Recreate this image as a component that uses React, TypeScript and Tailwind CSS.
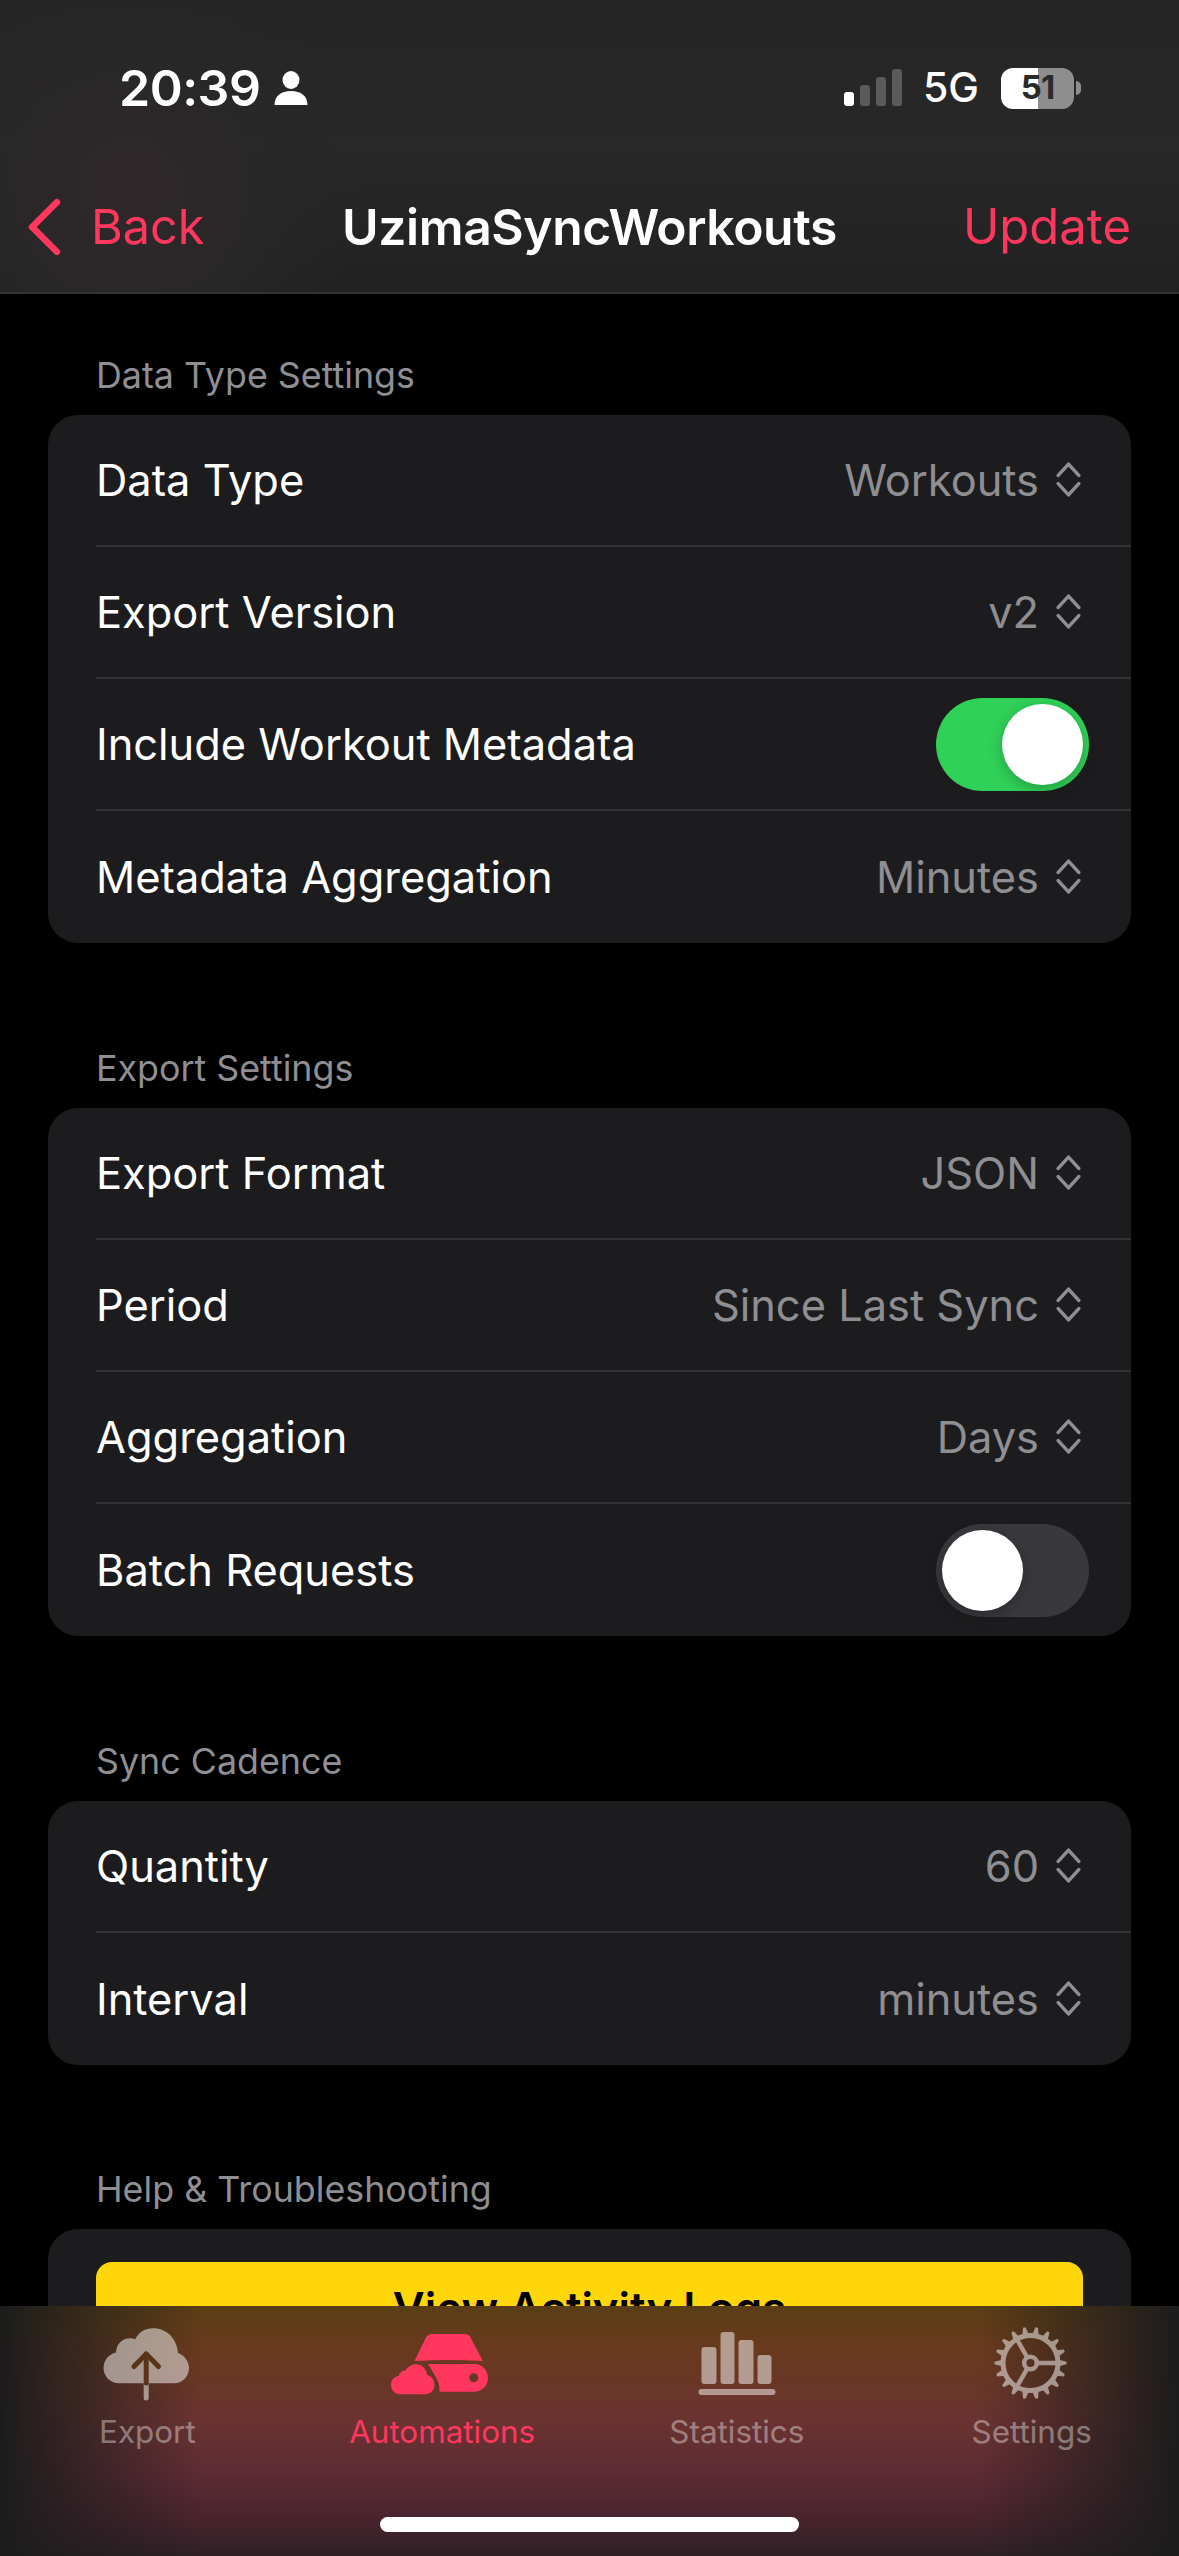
import React from "react";

const Chevrons = () => (
  <svg viewBox="0 0 24 36" className="w-[25px] h-[37px] shrink-0" fill="none" stroke="#8e8e93" strokeWidth="3.4" strokeLinecap="round" strokeLinejoin="round">
    <path d="M2 14 L12 3 L22 14" />
    <path d="M2 22 L12 33 L22 22" />
  </svg>
);

const Toggle = ({ on }: { on: boolean }) => (
  <div className={on ? "w-[153px] h-[93px] rounded-full bg-[#30d158] flex items-center justify-end pr-[6px]" : "w-[153px] h-[93px] rounded-full bg-[#39393d] flex items-center pl-[6px]"}>
    <div className="w-[81px] h-[81px] rounded-full bg-white shadow-[0_4px_14px_rgba(0,0,0,0.25)]" />
  </div>
);

type RowProps = { label: string; value?: string; toggle?: boolean; last?: boolean };

const Row = ({ label, value, toggle, last }: RowProps) => (
  <div className="pl-[48px] h-[132px]">
    <div className={last ? "h-full flex items-center justify-between" : "h-full flex items-center justify-between border-b-2 border-[#333335]"}>
      <span className="pt-[2px] text-[43.4px] text-white">{label}</span>
      {toggle !== undefined ? (
        <div className="pr-[42px]">
          <Toggle on={toggle} />
        </div>
      ) : (
        <div className="flex items-center gap-[17px] pr-[50px]">
          <span className="pt-[2px] text-[43.4px] text-[#8e8e93]">{value}</span>
          <Chevrons />
        </div>
      )}
    </div>
  </div>
);

const Section = ({ title, className, children }: { title: string; className: string; children: React.ReactNode }) => (
  <section className={className}>
    <h2 className="pl-[96px] h-[44px] leading-[45px] text-[35.8px] text-[#8e8e93] mb-[18px]">{title}</h2>
    <div className="mx-[48px] rounded-[30px] bg-[#1c1c1e] overflow-hidden">{children}</div>
  </section>
);

const ExportIcon = () => (
  <svg viewBox="0 0 100 76" className="w-[100px] h-[76px] overflow-visible opacity-50" fill="white">
    <path d="M22 57.3 C13 57.3 6.5 50 6.5 42 C6.5 34 12 28 19 26.5 C19.5 18 25 12.3 33 12.3 C35 12.3 37 12.8 38 13.5 C42 6 48 2.3 56 2.3 C70 2.3 80 13 81 27 C87 29 92 35 92 42 C92 51 85 57.3 77 57.3 Z" />
    <path d="M49.2 57.3 V72" stroke="white" strokeWidth="5" strokeLinecap="round" />
  </svg>
);

const ExportArrow = () => (
  <svg viewBox="0 0 100 76" className="absolute inset-0 w-[100px] h-[76px]" fill="none" stroke="#5a3419" strokeWidth="5" strokeLinecap="round" strokeLinejoin="round">
    <path d="M49.2 57 V28" />
    <path d="M37 40.5 L49.2 28 L61.5 40.5" />
  </svg>
);

const AutomationsIcon = () => (
  <svg viewBox="0 0 100 76" className="w-[100px] h-[76px] overflow-visible" fill="#ff375f">
    <path d="M40 8 H73 C76 8 78 9.5 79 12.5 L90.8 35 C68 33.5 45 33.5 22.5 35 L33.5 12.5 C35 9.5 37 8 40 8 Z" />
    <path fillRule="evenodd" d="M36 38 H82 C90 38 96 44 96 52 C96 60 90 65.7 82 65.7 H47.5 C48 60 46 54 43 50 C41 46 38 41 36 38 Z M81.8 47.2 A4.5 4.5 0 1 0 81.8 56.2 A4.5 4.5 0 1 0 81.8 47.2 Z" />
    <path d="M8 68.3 C3 68.3 -1 64 -1 59 C-1 54 2.5 50.5 6.5 50 C7.5 46.5 10 44.5 13.5 44.5 C16 40.5 20 38.3 24 38.3 C30 38.3 34.5 43 35 49 C39.5 50 42.5 54 42.5 59 C42.5 64.5 38.5 68.3 33 68.3 Z" />
  </svg>
);

const StatisticsIcon = () => (
  <svg viewBox="0 0 100 76" className="w-[100px] h-[76px] opacity-50" fill="white">
    <rect x="14.5" y="21" width="15" height="37" rx="3" />
    <rect x="33.5" y="6" width="14" height="52" rx="3" />
    <rect x="51.5" y="14" width="15" height="44" rx="3" />
    <rect x="70.5" y="29" width="14" height="29" rx="3" />
    <rect x="11.5" y="63" width="77" height="6" rx="3" />
  </svg>
);

const teeth = Array.from({ length: 18 }, (_, i) => i * 20);

const SettingsIcon = () => (
  <svg viewBox="0 0 100 76" className="w-[100px] h-[76px] opacity-50" fill="none" stroke="white">
    <circle cx="48.5" cy="37" r="27.5" strokeWidth="5" />
    <circle cx="48.5" cy="37" r="6.3" strokeWidth="4.5" />
    <path d="M54.8 37 H76 M45.4 42.4 L34.7 61 M45.4 31.6 L34.7 13" strokeWidth="4.5" />
    {teeth.map((deg) => (
      <path key={deg} d="M76 33.5 L84.5 35.7 V38.3 L76 40.5 Z" fill="white" stroke="none" transform={`rotate(${deg} 48.5 37)`} />
    ))}
  </svg>
);

const Tab = ({ label, active, children }: { label: string; active?: boolean; children: React.ReactNode }) => (
  <div className="flex flex-col items-center">
    <div className="relative w-[100px] h-[76px]">{children}</div>
    <span className={active ? "mt-[10px] text-[31.4px] leading-[40px] text-[#ff375f]" : "mt-[10px] text-[31.4px] leading-[40px] text-white/40"}>{label}</span>
  </div>
);

export default function App() {
  return (
    <div className="relative w-[1179px] h-[2556px] overflow-hidden bg-black font-[Inter,sans-serif]">
      <header className="h-[294px] border-b-2 border-[#333333] bg-[radial-gradient(circle_at_130px_190px,#30282a_0,#292727_110px,transparent_240px),linear-gradient(180deg,#252525,#282828_50%,#212121)]">
        <div className="h-[176px] pt-[64px] pl-[119px] pr-[98px] flex items-start justify-between">
          <div className="flex items-center gap-[14px] h-[48px]">
            <span className="text-[50px] font-semibold text-white tracking-[-0.5px]">20:39</span>
            <svg viewBox="0 0 34 34" className="w-[34px] h-[34px]" fill="white">
              <ellipse cx="17" cy="9" rx="8.5" ry="9" />
              <path d="M0.5 34 C0.5 25 7 20 17 20 C27 20 33.5 25 33.5 34 Z" />
            </svg>
          </div>
          <div className="flex items-center h-[48px]">
            <svg viewBox="0 0 58 38" className="w-[58px] h-[38px] mr-[21px]">
              <rect x="0" y="23" width="10" height="14" rx="3" fill="white" />
              <rect x="16" y="16" width="10" height="21" rx="3" fill="#5a5a5a" />
              <rect x="32" y="8" width="10" height="29" rx="3" fill="#5a5a5a" />
              <rect x="48" y="0" width="10" height="37" rx="3" fill="#5a5a5a" />
            </svg>
            <span className="text-[41px] font-medium text-white mr-[22px]">5G</span>
            <div className="relative flex items-center justify-center w-[73px] h-[41px] rounded-[12px] overflow-hidden bg-[linear-gradient(90deg,#ffffff_51%,#8e8e8e_51%)]">
              <span className="text-[33px] font-bold text-[#2a2a2a] tracking-[-1px]">51</span>
            </div>
            <div className="w-[5px] h-[14px] ml-[2px] rounded-r-full bg-[#8e8e8e]" />
          </div>
        </div>
        <div className="h-[116px] grid grid-cols-[1fr_auto_1fr] items-center pb-[14px]">
          <div className="flex items-center pl-[28px]">
            <svg viewBox="0 0 32 56" className="w-[33px] h-[58px]" fill="none" stroke="#ff375f" strokeWidth="6.5" strokeLinecap="round" strokeLinejoin="round">
              <path d="M28 4 L4 28 L28 52" />
            </svg>
            <span className="ml-[30px] text-[48.6px] text-[#ff375f]">Back</span>
          </div>
          <h1 className="text-[49.8px] font-semibold text-white tracking-[-0.4px]">UzimaSyncWorkouts</h1>
          <div className="justify-self-end pr-[48px] text-[49px] text-[#ff375f]">Update</div>
        </div>
      </header>

      <Section title="Data Type Settings" className="mt-[59px]">
        <Row label="Data Type" value="Workouts" />
        <Row label="Export Version" value="v2" />
        <Row label="Include Workout Metadata" toggle={true} />
        <Row label="Metadata Aggregation" value="Minutes" last />
      </Section>

      <Section title="Export Settings" className="mt-[103px]">
        <Row label="Export Format" value="JSON" />
        <Row label="Period" value="Since Last Sync" />
        <Row label="Aggregation" value="Days" />
        <Row label="Batch Requests" toggle={false} last />
      </Section>

      <Section title="Sync Cadence" className="mt-[103px]">
        <Row label="Quantity" value="60" />
        <Row label="Interval" value="minutes" last />
      </Section>

      <Section title="Help &amp; Troubleshooting" className="mt-[102px]">
        <div className="px-[48px] py-[33px]">
          <button className="w-full h-[94px] rounded-[16px] bg-[#ffd60a] text-[43.8px] font-semibold text-black">View Activity Logs</button>
        </div>
      </Section>

      <nav className="absolute inset-x-0 bottom-0 h-[250px] bg-[linear-gradient(180deg,#5a3e14_0%,#683a1c_15%,#6b3330_45%,#5c2b34_68%,#47232d_86%,#2e2125_100%)]">
        <div className="relative h-full bg-[linear-gradient(90deg,#1c1c1c_0,#1c1c1c00_200px,#1c1c1c00_979px,#1c1c1c_1179px)]">
          <div className="grid grid-cols-4 pt-[20px]">
            <Tab label="Export">
              <ExportIcon />
              <ExportArrow />
            </Tab>
            <Tab label="Automations" active>
              <AutomationsIcon />
            </Tab>
            <Tab label="Statistics">
              <StatisticsIcon />
            </Tab>
            <Tab label="Settings">
              <SettingsIcon />
            </Tab>
          </div>
          <div className="absolute left-[380px] top-[211px] w-[419px] h-[15px] rounded-full bg-white" />
        </div>
      </nav>
    </div>
  );
}
